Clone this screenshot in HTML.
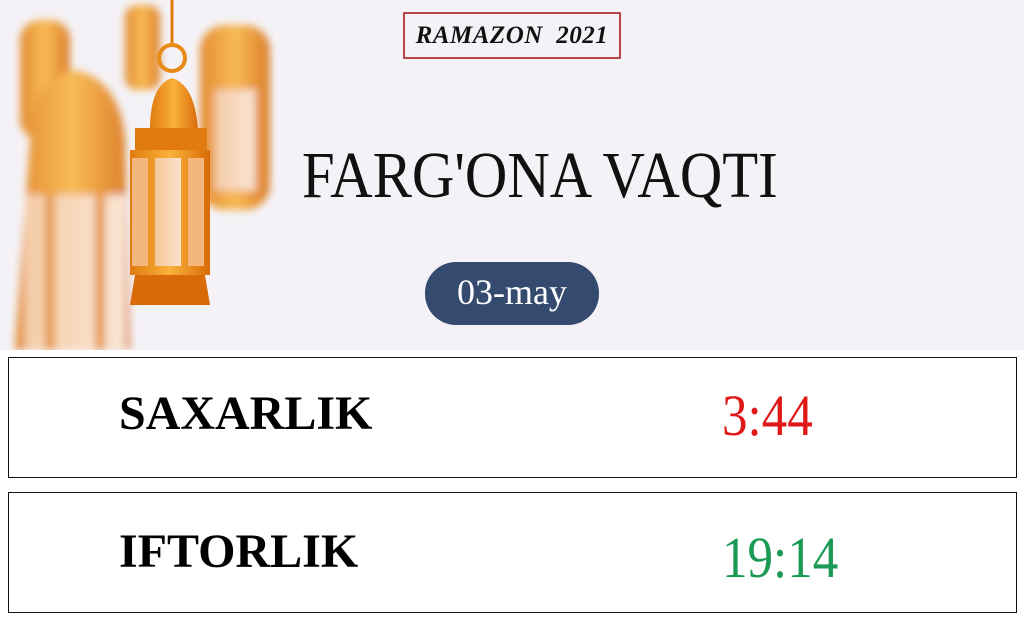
<!DOCTYPE html>
<html><head><meta charset="utf-8"><style>
*{margin:0;padding:0;box-sizing:border-box}
body{width:1024px;height:620px;background:#fff;position:relative;overflow:hidden;font-family:"Liberation Serif",serif}
.hdr{position:absolute;left:0;top:0;width:1024px;height:350px;background:#f4f2f6}
.abs{position:absolute}
.ram{left:403px;top:12px;width:218px;height:47px;border:2px solid #b84848;font-weight:bold;font-style:italic;font-size:25px;text-align:center;line-height:43px;color:#111;white-space:pre;letter-spacing:.5px}
.title{left:302px;top:138px;font-size:66px;line-height:76px;color:#111;white-space:nowrap;transform:scaleX(.89);transform-origin:left}
.pill{left:425px;top:262px;width:174px;height:63px;background:#344a6e;border-radius:31px;color:#fff;font-size:36px;text-align:center;line-height:60px}
.box{left:8px;width:1009px;height:121px;border:1.5px solid #111;background:#fff}
.lbl{position:absolute;left:110px;font-weight:bold;font-size:48px;line-height:50px}
.tm{position:absolute;left:713px;font-size:58px;line-height:60px;transform:scaleX(.88);transform-origin:left}
</style></head><body>
<div class="hdr"></div>
<svg class="abs" style="left:0;top:0" width="320" height="350">
<defs>
<linearGradient id="g" x1="0" x2="1"><stop offset="0" stop-color="#e07a10"/><stop offset=".5" stop-color="#f9b23a"/><stop offset="1" stop-color="#d96a08"/></linearGradient>
<linearGradient id="p" x1="0" x2="1"><stop offset="0" stop-color="#f6c79a"/><stop offset="1" stop-color="#fbe3cc"/></linearGradient>
<filter id="b"><feGaussianBlur stdDeviation="4"/></filter>
</defs>
<g filter="url(#b)" opacity=".85">
<rect x="20" y="20" width="50" height="120" rx="20" fill="url(#g)"/>
<rect x="125" y="5" width="35" height="85" rx="12" fill="url(#g)"/>
<rect x="200" y="25" width="70" height="185" rx="25" fill="url(#g)"/>
<rect x="215" y="90" width="40" height="100" fill="url(#p)"/>
<path d="M30 140 Q30 80 75 70 Q120 80 125 140 L130 350 L15 350 Z" fill="url(#g)"/>
<rect x="25" y="195" width="100" height="155" fill="url(#p)"/>
<rect x="45" y="195" width="10" height="155" fill="#e58a25"/>
<rect x="95" y="195" width="10" height="155" fill="#e58a25"/>
</g>
<line x1="172" y1="0" x2="172" y2="45" stroke="#e07a10" stroke-width="3"/>
<circle cx="172" cy="58" r="13" fill="none" stroke="#e88a18" stroke-width="4"/>
<path d="M150 130 Q150 85 172 78 Q195 85 198 130 Z" fill="url(#g)"/>
<rect x="135" y="128" width="72" height="22" fill="#e27a12"/>
<rect x="130" y="150" width="80" height="125" fill="url(#g)"/>
<rect x="155" y="158" width="26" height="108" fill="url(#p)"/>
<rect x="132" y="158" width="16" height="108" fill="#f3b77e"/>
<rect x="188" y="158" width="16" height="108" fill="#f3b77e"/>
<path d="M135 275 L205 275 L210 305 L130 305 Z" fill="#d96a08"/>
</svg>
<div class="abs ram">RAMAZON  2021</div>
<div class="abs title">FARG'ONA VAQTI</div>
<div class="abs pill">03-may</div>
<div class="abs box" style="top:357px"><div class="lbl" style="top:31px">SAXARLIK</div><div class="tm" style="top:28px;color:#e01818">3:44</div></div>
<div class="abs box" style="top:492px"><div class="lbl" style="top:34px">IFTORLIK</div><div class="tm" style="top:35px;color:#1a9a55">19:14</div></div>
</body></html>
